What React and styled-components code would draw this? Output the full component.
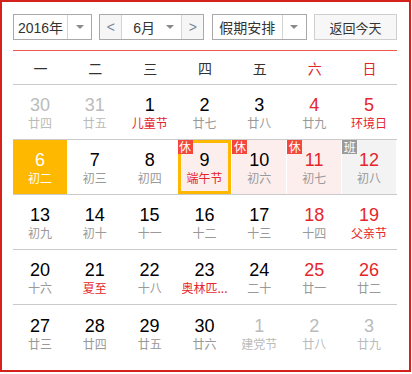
import React from 'react'
import styled, { createGlobalStyle } from 'styled-components';

const GlobalStyle = createGlobalStyle`
	body {
		margin: 0;
		background: #fff;
		font-family: "Liberation Sans", Arial, "Noto Sans CJK SC", sans-serif;
	}
`;

const weekNames = ['一', '二', '三', '四', '五', '六', '日'];

// o: other month, r: red number, lr: red label, hl: orange highlight,
// sel: selected, rest: 休, work: 班
const weeks = [
	[
		{ n: 30, l: '廿四', o: true },
		{ n: 31, l: '廿五', o: true },
		{ n: 1, l: '儿童节', lr: true },
		{ n: 2, l: '廿七' },
		{ n: 3, l: '廿八' },
		{ n: 4, l: '廿九', r: true },
		{ n: 5, l: '环境日', r: true, lr: true },
	],
	[
		{ n: 6, l: '初二', hl: true },
		{ n: 7, l: '初三' },
		{ n: 8, l: '初四' },
		{ n: 9, l: '端午节', lr: true, sel: true, rest: true },
		{ n: 10, l: '初六', rest: true },
		{ n: 11, l: '初七', r: true, rest: true },
		{ n: 12, l: '初八', r: true, work: true },
	],
	[
		{ n: 13, l: '初九' },
		{ n: 14, l: '初十' },
		{ n: 15, l: '十一' },
		{ n: 16, l: '十二' },
		{ n: 17, l: '十三' },
		{ n: 18, l: '十四', r: true },
		{ n: 19, l: '父亲节', r: true, lr: true },
	],
	[
		{ n: 20, l: '十六' },
		{ n: 21, l: '夏至', lr: true },
		{ n: 22, l: '十八' },
		{ n: 23, l: '奥林匹...', lr: true },
		{ n: 24, l: '二十' },
		{ n: 25, l: '廿一', r: true },
		{ n: 26, l: '廿二', r: true },
	],
	[
		{ n: 27, l: '廿三' },
		{ n: 28, l: '廿四' },
		{ n: 29, l: '廿五' },
		{ n: 30, l: '廿六' },
		{ n: 1, l: '建党节', o: true },
		{ n: 2, l: '廿八', o: true },
		{ n: 3, l: '廿九', o: true },
	],
];

const cellBg = (d) => {
	if (d.hl) return '#ffb800';
	if (d.work) return '#f3f3f3';
	if (d.rest) return '#fdeeee';
	return 'transparent';
};

const numColor = (d) => {
	if (d.hl) return '#fff';
	if (d.o) return '#bbb';
	if (d.r) return '#e4262b';
	return '#000';
};

const labelColor = (d) => {
	if (d.hl) return '#fff';
	if (d.o) return '#bbb';
	if (d.lr) return '#e4262b';
	return '#999';
};

const Calendar = () => {
	return (
		<Frame>
			<GlobalStyle />
			<Toolbar>
				<SelectBox $w={79}>
					<SelectText>2016年</SelectText>
					<ArrowPart><Caret /></ArrowPart>
				</SelectBox>
				<MonthGroup>
					<NavBtn>&lt;</NavBtn>
					<MonthSelect>
						<span>6月</span>
						<Caret />
					</MonthSelect>
					<NavBtn $right>&gt;</NavBtn>
				</MonthGroup>
				<SelectBox $w={95}>
					<SelectText>假期安排</SelectText>
					<ArrowPart><Caret /></ArrowPart>
				</SelectBox>
				<TodayBtn>返回今天</TodayBtn>
			</Toolbar>
			<RedLine />
			<WeekHead>
				{weekNames.map((w, i) => (
					<WeekName key={w} $red={i > 4}>{w}</WeekName>
				))}
			</WeekHead>
			{weeks.map((row, ri) => (
				<WeekRow key={ri} $last={ri === weeks.length - 1}>
					{row.map((d, di) => (
						<Cell key={di} $bg={cellBg(d)} $sel={d.sel}>
							{d.rest && <Badge>休</Badge>}
							{d.work && <Badge $gray>班</Badge>}
							<DayNum $color={numColor(d)}>{d.n}</DayNum>
							<Lunar $color={labelColor(d)}>{d.l}</Lunar>
						</Cell>
					))}
				</WeekRow>
			))}
		</Frame>
	)
}

const Frame = styled.div`
	width: 411px;
	height: 372px;
	box-sizing: border-box;
	border: 2px solid #d2221b;
	padding: 12px 12px 0 11px;
`;

const Toolbar = styled.div`
	display: flex;
	justify-content: space-between;
	height: 26px;
	font-family: "Noto Sans CJK SC", sans-serif;
	font-size: 13px;
	color: #333;
`;

const SelectBox = styled.div`
	display: flex;
	width: ${p => p.$w}px;
	box-sizing: border-box;
	border: 1px solid #a9a9a9;
	background: #fff;
`;

const SelectText = styled.div`
	flex: 1;
	display: flex;
	align-items: center;
	justify-content: center;
	font-family: "Liberation Sans", "Noto Sans CJK SC", sans-serif;
	font-size: 14px;
`;

const ArrowPart = styled.div`
	width: 23px;
	display: flex;
	align-items: center;
	justify-content: center;
	border-left: 1px solid #d4d4d4;
`;

const Caret = styled.i`
	display: inline-block;
	width: 0;
	height: 0;
	border-left: 4px solid transparent;
	border-right: 4px solid transparent;
	border-top: 4px solid #8a8a8a;
`;

const MonthGroup = styled.div`
	display: flex;
	width: 105px;
	box-sizing: border-box;
	border: 1px solid #a9a9a9;
`;

const NavBtn = styled.div`
	width: 21px;
	display: flex;
	align-items: center;
	justify-content: center;
	background: #f6f6f6;
	color: #7d8898;
	font-family: "Liberation Sans", sans-serif;
	font-size: 14px;
	${p => p.$right ? 'border-left: 1px solid #d4d4d4;' : 'border-right: 1px solid #d4d4d4;'}
`;

const MonthSelect = styled.div`
	flex: 1;
	display: flex;
	align-items: center;
	justify-content: space-between;
	padding: 0 7px 0 11px;
	font-family: "Liberation Sans", "Noto Sans CJK SC", sans-serif;
	font-size: 14px;
`;

const TodayBtn = styled.div`
	width: 83px;
	box-sizing: border-box;
	border: 1px solid #cfcfcf;
	background: #f7f7f7;
	display: flex;
	align-items: center;
	justify-content: center;
`;

const RedLine = styled.div`
	height: 1px;
	margin-top: 10px;
	background: #f0574a;
`;

const WeekHead = styled.div`
	display: grid;
	grid-template-columns: repeat(7, 1fr);
	height: 33px;
	align-items: center;
	border-bottom: 1px solid #cacaca;
`;

const WeekName = styled.div`
	text-align: center;
	font-family: "Noto Sans CJK SC", sans-serif;
	font-size: 14px;
	color: ${p => p.$red ? '#e4262b' : '#333'};
`;

const WeekRow = styled.div`
	display: grid;
	grid-template-columns: repeat(7, 1fr);
	height: 55px;
	box-sizing: border-box;
	border-bottom: ${p => p.$last ? 'none' : '1px solid #cacaca'};
`;

const Cell = styled.div`
	position: relative;
	display: flex;
	flex-direction: column;
	align-items: center;
	justify-content: center;
	padding-top: 2px;
	box-sizing: border-box;
	margin-right: 1px;
	background: ${p => p.$bg};
	box-shadow: ${p => p.$sel ? 'inset 0 0 0 3px #ffb800' : 'none'};
`;

const Badge = styled.span`
	position: absolute;
	top: 0;
	left: 0;
	width: 15px;
	height: 14px;
	line-height: 14px;
	text-align: center;
	font-family: "Noto Sans CJK SC", sans-serif;
	font-size: 12px;
	color: #fff;
	background: ${p => p.$gray ? '#9a9a9a' : '#f2473a'};
`;

const DayNum = styled.div`
	font-size: 18px;
	line-height: 20px;
	color: ${p => p.$color};
`;

const Lunar = styled.div`
	font-family: "Noto Sans CJK SC", sans-serif;
	font-size: 12px;
	line-height: 16px;
	white-space: nowrap;
	color: ${p => p.$color};
`;

export default Calendar
